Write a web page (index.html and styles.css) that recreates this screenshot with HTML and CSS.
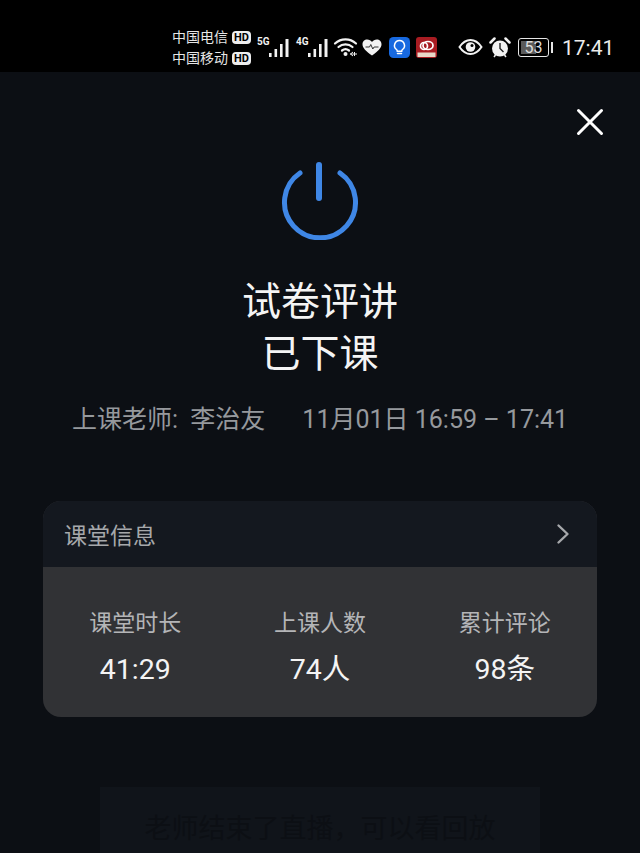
FILE: index.html
```html
<!DOCTYPE html>
<html lang="zh">
<head>
  <meta charset="utf-8">
  <title>试卷评讲</title>
  <link rel="stylesheet" href="styles.css">
</head>
<body>
  <div id="statusbar">
    <div class="carriers">
      <div class="carrier">中国电信<span class="hd">HD</span></div>
      <div class="carrier">中国移动<span class="hd">HD</span></div>
    </div>
    <div class="signal">
      <span class="net">5G</span>
      <svg width="22" height="20" viewBox="0 0 22 20"><g fill="#f2f2f2"><rect x="0" y="15" width="2.600" height="4"/><rect x="5.500" y="11" width="2.600" height="8"/><rect x="11" y="6" width="2.600" height="13"/><rect x="16.500" y="1" width="3" height="18"/></g></svg>
    </div>
    <div class="signal">
      <span class="net">4G</span>
      <svg width="22" height="20" viewBox="0 0 22 20"><g fill="#f2f2f2"><rect x="0" y="15" width="2.600" height="4"/><rect x="5.500" y="11" width="2.600" height="8"/><rect x="11" y="6" width="2.600" height="13"/><rect x="16.500" y="1" width="3" height="18"/></g></svg>
    </div>
    <svg class="wifi" width="25" height="20" viewBox="0 0 25 20"><g fill="none" stroke="#f2f2f2" stroke-width="2.200" stroke-linecap="round"><path d="M2 6.500C8 1 17 1 23 6.500"/><path d="M5.500 10C9.500 6.500 15.500 6.500 19.500 10"/><path d="M9 13.500C11 12 14 12 16 13.500"/></g><circle cx="12.500" cy="17" r="2" fill="#f2f2f2"/><path d="M17 17h7M20 15l-2.500 2 2.500 2M21.500 15v4" stroke="#f2f2f2" stroke-width="1" fill="none"/></svg>
    <svg class="heart" width="20" height="17" viewBox="0 0 20 17"><path d="M10 16.500C4 12 .5 9 .5 5.200 .5 2.500 2.600.5 5.200.5 7.200.5 9 1.500 10 3c1-1.500 2.800-2.500 4.800-2.500 2.600 0 4.700 2 4.700 4.700C19.500 9 16 12 10 16.500z" fill="#f2f2f2"/><path d="M3.500 8h4l1.300-2.500 2 4.500 1.300-2h4.400" fill="none" stroke="#333" stroke-width="1"/></svg>
    <svg class="app" width="21" height="21" viewBox="0 0 21 21"><rect width="21" height="21" rx="4.500" fill="#1769e0"/><path d="M10.500 3.500a5 5 0 0 0-3 9c.6.500.8 1 .8 1.700h4.400c0-.7.2-1.200.8-1.700a5 5 0 0 0-3-9z" fill="none" stroke="#fff" stroke-width="1.500"/><path d="M8.500 16.500h4" stroke="#fff" stroke-width="1.500" stroke-linecap="round"/></svg>
    <svg class="app app-red" width="21" height="21" viewBox="0 0 21 21"><rect width="21" height="21" rx="3" fill="#a81c22"/><g fill="none" stroke="#fff" stroke-width="1.700"><circle cx="8" cy="9" r="3.500"/><ellipse cx="12" cy="8.500" rx="5" ry="4"/></g><rect x="1.500" y="15.500" width="18" height="4.500" fill="#e8d8c8"/></svg>
    <svg class="eye" width="25" height="16" viewBox="0 0 24 16"><path d="M1 8C4 3.500 7.800 1 12 1s8 2.500 11 7c-3 4.500-6.800 7-11 7S4 12.500 1 8z" fill="none" stroke="#f2f2f2" stroke-width="2"/><circle cx="12" cy="8" r="4.800" fill="#f2f2f2"/><circle cx="13.500" cy="6.500" r="1.500" fill="#000"/></svg>
    <svg class="alarm" width="22" height="21" viewBox="0 0 22 21"><circle cx="11" cy="11.500" r="8" fill="#f2f2f2"/><path d="M1.500 5.500 5.500 1.500M20.500 5.500 16.500 1.500" stroke="#f2f2f2" stroke-width="2.500" stroke-linecap="round"/><path d="M11 6v5.500l3.500 3.500" fill="none" stroke="#222" stroke-width="1.400"/><path d="M5 20l1.500-2M17 20l-1.500-2" stroke="#f2f2f2" stroke-width="1.500"/></svg>
    <div class="battery">
      <div class="battery-body"><span class="battery-fill"></span><span class="battery-num">53</span></div>
      <span class="battery-tip"></span>
    </div>
    <div class="clock">17:41</div>
  </div>

  <div id="main">
    <div class="close-row">
      <svg width="28" height="28" viewBox="0 0 28 28"><path d="M2.500 2.500 25.500 25.500M25.500 2.500 2.500 25.500" stroke="#fff" stroke-width="3" stroke-linecap="round"/></svg>
    </div>
    <svg class="power" width="80" height="82" viewBox="0 0 80 82"><g fill="none" stroke="#3f87e6" stroke-linecap="round"><path d="M20 15A35.500 35.500 0 1 0 60 15" stroke-width="5"/><path d="M39 7V40" stroke-width="6"/></g></svg>
    <h1 class="title">试卷评讲<br>已下课</h1>
    <div class="meta"><span>上课老师:&nbsp;&nbsp;李治友</span><span>11月01日 16:59 – 17:41</span></div>

    <div class="card">
      <div class="card-head">
        <span>课堂信息</span>
        <svg width="14" height="22" viewBox="0 0 14 22"><path d="M2.500 2.500 11.500 11 2.500 19.500" fill="none" stroke="#a6a8ab" stroke-width="2.400" stroke-linecap="round" stroke-linejoin="round"/></svg>
      </div>
      <div class="card-body">
        <div class="stat"><div class="stat-label">课堂时长</div><div class="stat-value">41:29</div></div>
        <div class="stat"><div class="stat-label">上课人数</div><div class="stat-value">74人</div></div>
        <div class="stat"><div class="stat-label">累计评论</div><div class="stat-value">98条</div></div>
      </div>
    </div>

    <div class="ghost">老师结束了直播，可以看回放</div>
  </div>
</body>
</html>
```

FILE: styles.css
```css
html, body {
  margin: 0;
  padding: 0;
}
body {
  width: 640px;
  height: 853px;
  overflow: hidden;
  background-color: #0c0f14;
  font-family: Roboto, "Noto Sans CJK SC", sans-serif;
}
#statusbar {
  height: 72px;
  background-color: #000;
  color: #f2f2f2;
  display: flex;
  align-items: center;
  padding: 22px 0 0 172px;
  box-sizing: border-box;
}
.carriers {
  width: 79px;
  margin-top: 2px;
}
.carrier {
  font-size: 14px;
  line-height: 21px;
  display: flex;
  align-items: center;
  color: #e6e6e6;
}
.hd {
  margin-left: 4px;
  background-color: #eee;
  color: #000;
  font-size: 11px;
  font-weight: 700;
  line-height: 13px;
  padding: 0 2px;
  border-radius: 4px;
}
.signal {
  display: flex;
  align-items: flex-start;
  width: 34px;
  margin-left: 6px;
  margin-right: -1px;
}
.signal svg {
  margin-top: 1px;
}
.net {
  font-size: 10px;
  font-weight: 700;
  line-height: 12px;
  width: 12px;
  margin-top: -1px;
}
.wifi {
  margin-left: 4px;
}
.heart {
  margin-left: 4px;
}
.app {
  margin-left: 7px;
}
.app-red {
  margin-left: 6px;
}
.eye {
  margin-left: 21px;
}
.alarm {
  margin-left: 6px;
}
.battery {
  display: flex;
  align-items: center;
  margin-left: 7px;
}
.battery-body {
  width: 29px;
  height: 17px;
  border: 1.500px solid #e6e6e6;
  border-radius: 3px;
  position: relative;
  display: flex;
  align-items: center;
  justify-content: center;
}
.battery-fill {
  position: absolute;
  left: 2px;
  top: 2px;
  bottom: 2px;
  width: 53%;
  background-color: #5a5a5a;
}
.battery-num {
  position: relative;
  font-size: 16px;
  color: #ddd;
}
.battery-tip {
  width: 2px;
  height: 11px;
  margin-left: 2px;
  background-color: #e6e6e6;
}
.clock {
  font-size: 21px;
  margin: 1px 0 0 9px;
  color: #ececec;
}
#main {
  display: flex;
  flex-direction: column;
  align-items: center;
}
.close-row {
  align-self: stretch;
  display: flex;
  justify-content: flex-end;
  padding: 36px 36px 0 0;
  height: 28px;
}
.close-row svg {
  display: block;
}
.power {
  display: block;
  margin-top: 22px;
}
.title {
  margin: 36px 0 0;
  font-size: 39px;
  font-weight: 400;
  line-height: 52px;
  text-align: center;
  color: #f4f4f4;
}
.meta {
  margin-top: 23px;
  display: flex;
  gap: 37px;
  font-size: 25px;
  line-height: 34px;
  color: #96999d;
}
.card {
  margin-top: 64px;
  width: 554px;
  border-radius: 18px;
  overflow: hidden;
  background-color: #313235;
}
.card-head {
  height: 66px;
  background-color: #14181f;
  display: flex;
  align-items: center;
  justify-content: space-between;
  padding: 0 27px 0 21px;
  font-size: 23px;
  color: #a6a8ab;
}
.card-body {
  height: 150px;
  display: grid;
  grid-template-columns: 1fr 1fr 1fr;
  padding-top: 39px;
  box-sizing: border-box;
  text-align: center;
}
.stat-label {
  font-size: 23px;
  line-height: 36px;
  color: #b4b5b7;
}
.stat-value {
  margin-top: 9px;
  font-size: 28.500px;
  line-height: 38px;
  color: #f4f4f4;
}
.ghost {
  margin-top: 70px;
  width: 440px;
  height: 80px;
  padding-top: 24px;
  background-color: #10141a;
  font-size: 27px;
  line-height: 36px;
  text-align: center;
  color: #0c0f14;
}
```
